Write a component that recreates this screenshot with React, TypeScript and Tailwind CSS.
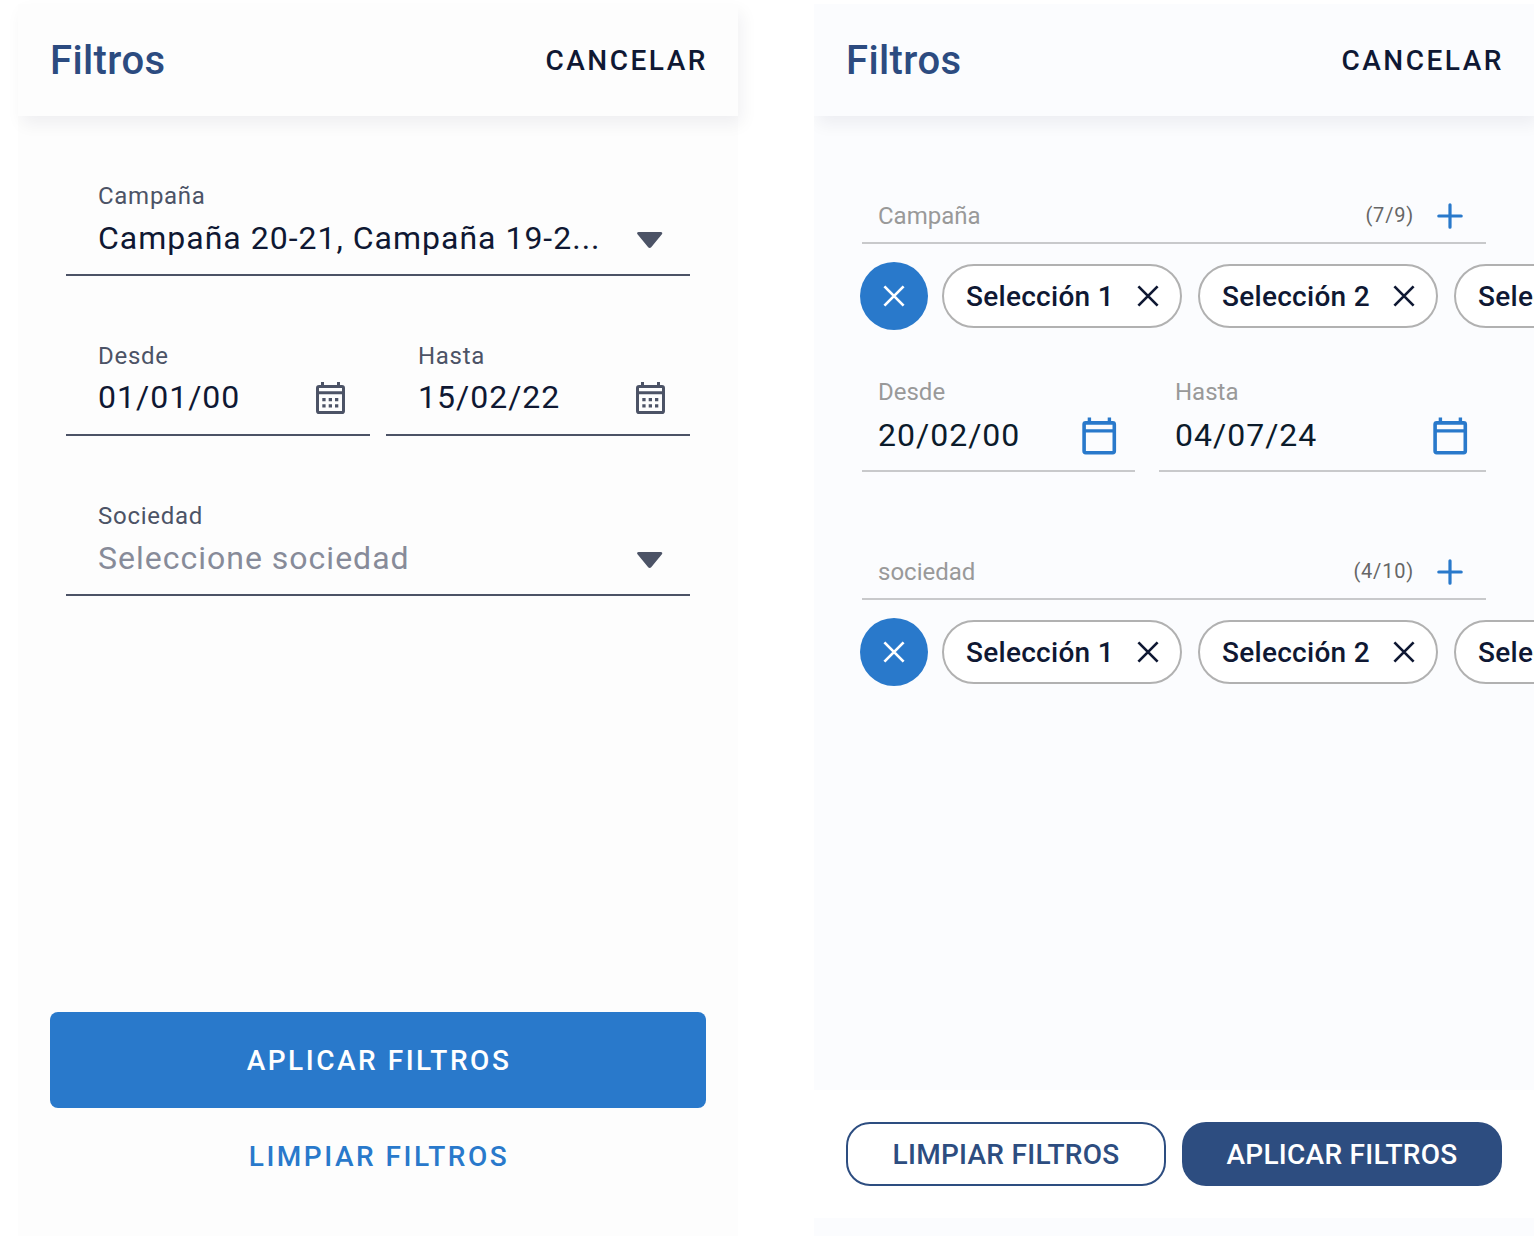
import { useId, useState } from "react";
import type { ReactNode } from "react";

function CaretIcon() {
  return (
    <svg viewBox="0 0 32 32" className="pointer-events-none h-8 w-8 shrink-0" fill="#4c5366" aria-hidden="true">
      <path d="M4.6 10h22.2c1.4 0 2 1.2 1.1 2.2L17.2 25.2c-.8 1-2.2 1-3 0L3.5 12.2C2.6 11.2 3.2 10 4.6 10z" />
    </svg>
  );
}

function CalendarGridIcon() {
  return (
    <svg viewBox="0 0 32 32" className="h-8 w-8" fill="#4c5366" aria-hidden="true">
      <rect x="3.5" y="4.5" width="26" height="26" rx="1.6" fill="none" stroke="#4c5366" strokeWidth="3" />
      <path d="M7 0h3v4H7zM23 0h3v4h-3zM4 9.2h25v3H4z" />
      <path d="M8.3 16h3.3v3.2H8.3zM14.7 16H18v3.2h-3.3zM21 16h3.3v3.2H21zM8.3 22.3h3.3v3.3H8.3zM14.7 22.3H18v3.3h-3.3zM21 22.3h3.3v3.3H21z" />
    </svg>
  );
}

function CalendarBlankIcon() {
  return (
    <svg viewBox="0 0 40 40" className="h-10 w-10" fill="#2979cb" aria-hidden="true">
      <rect x="5.1" y="6.9" width="30.2" height="29.8" rx="1.6" fill="none" stroke="#2979cb" strokeWidth="3.6" />
      <path d="M8.7 1.5h3.4V6H8.7zM28.7 1.5h3.4V6h-3.4zM5.5 13.2h30v3.2h-30z" />
    </svg>
  );
}

function PlusIcon() {
  return (
    <svg viewBox="0 0 40 40" className="h-10 w-10" fill="none" stroke="#2979cb" strokeWidth="3.2" strokeLinecap="round" aria-hidden="true">
      <path d="M20 8.8v22.4M8.8 20h22.4" />
    </svg>
  );
}

function CloseIcon() {
  return (
    <svg viewBox="0 0 32 32" className="h-8 w-8" fill="none" stroke="currentColor" strokeWidth="2.7" aria-hidden="true">
      <path d="M6.4 6.4l19.2 19.2M25.6 6.4L6.4 25.6" />
    </svg>
  );
}

function PanelHeader() {
  return (
    <header className="flex h-28 items-center justify-between bg-inherit pt-0.5 pr-[30px] pl-8 shadow-[4px_8px_16px_rgba(15,24,51,0.06)]">
      <h1 className="text-[40px] leading-[48px] font-medium tracking-[0.01em] text-[#2c4b80]">Filtros</h1>
      <button type="button" className="text-[28px] leading-8 font-medium tracking-[0.09em] text-[#0f1833]">
        CANCELAR
      </button>
    </header>
  );
}

function FieldShell({ id, label, children }: { id: string; label: string; children: ReactNode }) {
  return (
    <div className="min-w-0 border-b-2 border-[#4c5366] pt-4 pr-6 pb-2.5 pl-8">
      <label htmlFor={id} className="block text-2xl leading-8 tracking-[0.03em] text-[#4c5366]">
        {label}
      </label>
      <div className="flex h-[52px] items-center gap-4">{children}</div>
    </div>
  );
}

function SelectField({ label, options, empty }: { label: string; options: string[]; empty?: boolean }) {
  const id = useId();
  return (
    <FieldShell id={id} label={label}>
      <select
        id={id}
        className={
          empty
            ? "h-12 min-w-0 flex-1 appearance-none bg-transparent pb-0.5 text-[32px] tracking-[1px] text-[#878b99] outline-none"
            : "h-12 min-w-0 flex-1 appearance-none bg-transparent pb-0.5 text-[32px] tracking-[1px] text-[#0f1833] outline-none"
        }
      >
        {options.map((o) => (
          <option key={o}>{o}</option>
        ))}
      </select>
      <CaretIcon />
    </FieldShell>
  );
}

function DateField({ label, value }: { label: string; value: string }) {
  const id = useId();
  const [date, setDate] = useState(value);
  return (
    <FieldShell id={id} label={label}>
      <input
        id={id}
        type="text"
        value={date}
        onChange={(e) => setDate(e.target.value)}
        className="h-12 w-0 min-w-0 flex-1 bg-transparent pb-0.5 text-[32px] tracking-[1px] text-[#0f1833] outline-none"
      />
      <button type="button" aria-label={`Abrir calendario: ${label}`} className="shrink-0">
        <CalendarGridIcon />
      </button>
    </FieldShell>
  );
}

function ClassicPanel() {
  return (
    <section className="flex min-w-0 flex-1 flex-col bg-[#fdfdfd]">
      <PanelHeader />
      <div className="flex flex-col gap-12 px-12 pt-12">
        <SelectField label="Campaña" options={["Campaña 20-21, Campaña 19-2..."]} />
        <div className="grid grid-cols-2 gap-4">
          <DateField label="Desde" value="01/01/00" />
          <DateField label="Hasta" value="15/02/22" />
        </div>
        <SelectField label="Sociedad" options={["Seleccione sociedad"]} empty />
      </div>
      <div className="mt-auto flex flex-col px-8 pt-12 pb-8 text-[28px] font-medium tracking-[0.09em]">
        <button type="button" className="h-24 rounded-lg bg-[#2979cb] pt-0.5 pl-0.5 text-white">
          APLICAR FILTROS
        </button>
        <button type="button" className="h-24 pt-0.5 pl-0.5 text-[#2979cb]">
          LIMPIAR FILTROS
        </button>
      </div>
    </section>
  );
}

function ChipGroup({ label, count, chips }: { label: string; count: string; chips: string[] }) {
  return (
    <div>
      <div className="flex h-[54px] items-center border-b-2 border-[#c8c9cb] px-4">
        <h2 className="flex-1 text-2xl text-[#999999]">{label}</h2>
        <span className="pb-0.5 text-xl tracking-[0.04em] text-[#666666]">{count}</span>
        <button type="button" aria-label={`Añadir ${label}`} className="ml-4">
          <PlusIcon />
        </button>
      </div>
      <div className="-mr-12 -ml-0.5 mt-[18px] flex items-center overflow-hidden">
        <button
          type="button"
          aria-label={`Quitar todo: ${label}`}
          className="mr-3.5 flex h-[68px] w-[68px] shrink-0 items-center justify-center rounded-full bg-[#2979cb] text-white"
        >
          <CloseIcon />
        </button>
        <ul className="flex gap-4">
          {chips.map((chip) => (
            <li
              key={chip}
              className="flex h-16 w-60 shrink-0 items-center justify-between rounded-full border-2 border-[#b1b1b1] bg-white pr-4 pl-[22px] text-[28px] font-medium tracking-[0.01em] whitespace-nowrap text-[#0f1833]"
            >
              <span className="pt-0.5">{chip}</span>
              <button type="button" aria-label={`Quitar ${chip}`}>
                <CloseIcon />
              </button>
            </li>
          ))}
        </ul>
      </div>
    </div>
  );
}

function LightDateField({ label, value }: { label: string; value: string }) {
  const id = useId();
  const [date, setDate] = useState(value);
  return (
    <div className="min-w-0 border-b-2 border-[#c8c9cb] px-4 pb-1.5">
      <label htmlFor={id} className="block text-2xl leading-8 text-[#999999]">
        {label}
      </label>
      <div className="flex h-14 items-center gap-4">
        <input
          id={id}
          type="text"
          value={date}
          onChange={(e) => setDate(e.target.value)}
          className="h-12 w-0 min-w-0 flex-1 bg-transparent pb-0.5 text-[32px] tracking-[1px] text-[#0b1b2b] outline-none"
        />
        <button type="button" aria-label={`Abrir calendario: ${label}`} className="shrink-0">
          <CalendarBlankIcon />
        </button>
      </div>
    </div>
  );
}

const SELECTIONS = ["Selección 1", "Selección 2", "Selección 3"];

function ChipsPanel() {
  return (
    <section className="flex min-w-0 flex-1 flex-col overflow-hidden bg-[#fbfcfe]">
      <PanelHeader />
      <div className="px-12 pt-[74px]">
        <ChipGroup label="Campaña" count="(7/9)" chips={SELECTIONS} />
        <div className="mt-[46px] mb-[74px] grid grid-cols-[273fr_327fr] gap-6">
          <LightDateField label="Desde" value="20/02/00" />
          <LightDateField label="Hasta" value="04/07/24" />
        </div>
        <ChipGroup label="sociedad" count="(4/10)" chips={SELECTIONS} />
      </div>
      <div className="mt-auto pt-12 pb-[18px]">
        <footer className="grid grid-cols-2 gap-4 bg-white p-8 text-[28px] font-medium tracking-[0.01em]">
          <button type="button" className="h-16 rounded-3xl border-2 border-[#2d4d80] pt-0.5 text-[#2d4d80]">
            LIMPIAR FILTROS
          </button>
          <button type="button" className="h-16 rounded-3xl bg-[#2d4d80] pt-0.5 text-white">
            APLICAR FILTROS
          </button>
        </footer>
      </div>
    </section>
  );
}

export default function App() {
  return (
    <main className="flex min-h-screen gap-[76px] bg-white pt-1 pl-[18px] font-[Roboto,sans-serif]">
      <ClassicPanel />
      <ChipsPanel />
    </main>
  );
}
